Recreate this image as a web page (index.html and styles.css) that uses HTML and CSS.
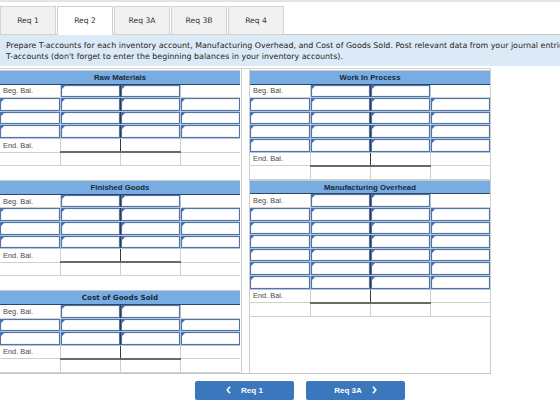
FILE: index.html
```html
<!DOCTYPE html>
<html lang="en">
<head>
  <meta charset="UTF-8">
  <meta name="viewport" content="width=device-width, initial-scale=1.0">
  <title>Req 2 - T-accounts</title>
  <link rel="stylesheet" href="styles.css">
</head>
<body>
  <div class="page">
    <ul class="tabs">
      <li>Req 1</li>
      <li class="active">Req 2</li>
      <li>Req 3A</li>
      <li>Req 3B</li>
      <li>Req 4</li>
    </ul>

    <div class="instructions">
      <p>Prepare T-accounts for each inventory account, Manufacturing Overhead, and Cost of Goods Sold. Post relevant data from your journal entries to these<br>T-accounts (don't forget to enter the beginning balances in your inventory accounts).</p>
    </div>

    <div class="accounts">
      <div class="col col-left">
        <!-- Raw Materials -->
        <table class="t-account gap">
          <tr><th colspan="4">Raw Materials</th></tr>
          <tr><td class="lbl">Beg. Bal.</td><td class="in dr"><span class="box"></span></td><td class="in"><span class="box"></span></td><td></td></tr>
          <tr><td class="in"><span class="box"></span></td><td class="in dr"><span class="box"></span></td><td class="in"><span class="box"></span></td><td class="in"><span class="box"></span></td></tr>
          <tr><td class="in"><span class="box"></span></td><td class="in dr"><span class="box"></span></td><td class="in"><span class="box"></span></td><td class="in"><span class="box"></span></td></tr>
          <tr><td class="in"><span class="box"></span></td><td class="in dr"><span class="box"></span></td><td class="in"><span class="box"></span></td><td class="in"><span class="box"></span></td></tr>
          <tr><td class="lbl">End. Bal.</td><td class="tot dr"></td><td class="tot"></td><td></td></tr>
          <tr><td></td><td></td><td></td><td></td></tr>
        </table>

        <!-- Finished Goods -->
        <table class="t-account gap">
          <tr><th colspan="4">Finished Goods</th></tr>
          <tr><td class="lbl">Beg. Bal.</td><td class="in dr"><span class="box"></span></td><td class="in"><span class="box"></span></td><td></td></tr>
          <tr><td class="in"><span class="box"></span></td><td class="in dr"><span class="box"></span></td><td class="in"><span class="box"></span></td><td class="in"><span class="box"></span></td></tr>
          <tr><td class="in"><span class="box"></span></td><td class="in dr"><span class="box"></span></td><td class="in"><span class="box"></span></td><td class="in"><span class="box"></span></td></tr>
          <tr><td class="in"><span class="box"></span></td><td class="in dr"><span class="box"></span></td><td class="in"><span class="box"></span></td><td class="in"><span class="box"></span></td></tr>
          <tr><td class="lbl">End. Bal.</td><td class="tot dr"></td><td class="tot"></td><td></td></tr>
          <tr><td></td><td></td><td></td><td></td></tr>
        </table>

        <!-- Cost of Goods Sold -->
        <table class="t-account">
          <tr><th colspan="4" class="alt">Cost of Goods Sold</th></tr>
          <tr><td class="lbl">Beg. Bal.</td><td class="in dr"><span class="box"></span></td><td class="in"><span class="box"></span></td><td></td></tr>
          <tr><td class="in"><span class="box"></span></td><td class="in dr"><span class="box"></span></td><td class="in"><span class="box"></span></td><td class="in"><span class="box"></span></td></tr>
          <tr><td class="in"><span class="box"></span></td><td class="in dr"><span class="box"></span></td><td class="in"><span class="box"></span></td><td class="in"><span class="box"></span></td></tr>
          <tr><td class="lbl">End. Bal.</td><td class="tot dr"></td><td class="tot"></td><td></td></tr>
          <tr><td></td><td></td><td></td><td></td></tr>
        </table>
      </div>

      <div class="col col-right">
        <!-- Work in Process -->
        <table class="t-account">
          <tr><th colspan="4">Work In Process</th></tr>
          <tr><td class="lbl">Beg. Bal.</td><td class="in dr"><span class="box"></span></td><td class="in"><span class="box"></span></td><td></td></tr>
          <tr><td class="in"><span class="box"></span></td><td class="in dr"><span class="box"></span></td><td class="in"><span class="box"></span></td><td class="in"><span class="box"></span></td></tr>
          <tr><td class="in"><span class="box"></span></td><td class="in dr"><span class="box"></span></td><td class="in"><span class="box"></span></td><td class="in"><span class="box"></span></td></tr>
          <tr><td class="in"><span class="box"></span></td><td class="in dr"><span class="box"></span></td><td class="in"><span class="box"></span></td><td class="in"><span class="box"></span></td></tr>
          <tr><td class="in"><span class="box"></span></td><td class="in dr"><span class="box"></span></td><td class="in"><span class="box"></span></td><td class="in"><span class="box"></span></td></tr>
          <tr><td class="lbl">End. Bal.</td><td class="tot dr"></td><td class="tot"></td><td></td></tr>
          <tr><td></td><td></td><td></td><td></td></tr>
        </table>

        <!-- Manufacturing Overhead -->
        <table class="t-account">
          <tr><th colspan="4">Manufacturing Overhead</th></tr>
          <tr><td class="lbl">Beg. Bal.</td><td class="in dr"><span class="box"></span></td><td class="in"><span class="box"></span></td><td></td></tr>
          <tr><td class="in"><span class="box"></span></td><td class="in dr"><span class="box"></span></td><td class="in"><span class="box"></span></td><td class="in"><span class="box"></span></td></tr>
          <tr><td class="in"><span class="box"></span></td><td class="in dr"><span class="box"></span></td><td class="in"><span class="box"></span></td><td class="in"><span class="box"></span></td></tr>
          <tr><td class="in"><span class="box"></span></td><td class="in dr"><span class="box"></span></td><td class="in"><span class="box"></span></td><td class="in"><span class="box"></span></td></tr>
          <tr><td class="in"><span class="box"></span></td><td class="in dr"><span class="box"></span></td><td class="in"><span class="box"></span></td><td class="in"><span class="box"></span></td></tr>
          <tr><td class="in"><span class="box"></span></td><td class="in dr"><span class="box"></span></td><td class="in"><span class="box"></span></td><td class="in"><span class="box"></span></td></tr>
          <tr><td class="in"><span class="box"></span></td><td class="in dr"><span class="box"></span></td><td class="in"><span class="box"></span></td><td class="in"><span class="box"></span></td></tr>
          <tr><td class="lbl">End. Bal.</td><td class="tot dr"></td><td class="tot"></td><td></td></tr>
          <tr><td></td><td></td><td></td><td></td></tr>
        </table>
      </div>
    </div>

    <div class="nav-buttons">
      <button>
        <svg width="5" height="8" viewBox="0 0 5 8"><path d="M4 0.8 L1.2 4 L4 7.2" fill="none" stroke="#fff" stroke-width="1.6"/></svg>
        <span>Req 1</span>
      </button>
      <button>
        <span>Req 3A</span>
        <svg width="5" height="8" viewBox="0 0 5 8"><path d="M1 0.8 L3.8 4 L1 7.2" fill="none" stroke="#fff" stroke-width="1.6"/></svg>
      </button>
    </div>
  </div>
</body>
</html>
```

FILE: styles.css
```css
body {
  margin: 0;
  overflow: hidden;
  background-color: #ffffff;
  color: #222;
  font-family: "DejaVu Sans", Verdana, sans-serif;
}

.page {
  width: 600px;
  border-top: 2px solid #e4e4e4;
}

/* Tabs */
.tabs {
  display: flex;
  gap: 1px;
  list-style: none;
  margin: 4px 0 -1px;
  padding: 0;
}

.tabs li {
  width: 56px;
  height: 29px;
  box-sizing: border-box;
  border: 1px solid #d3d3d3;
  background-color: #f1f1f1;
  font-size: 7.6px;
  line-height: 27px;
  text-align: center;
  color: #333;
}

.tabs li.active {
  position: relative;
  background-color: #ffffff;
  border-color: #cdcdcd;
  border-bottom-color: #ffffff;
}

/* Instructions */
.instructions {
  background-color: #dceaf7;
  border-top: 1px solid #c8c8c8;
  padding: 5px 6px 4px;
}

.instructions p {
  margin: 0;
  font-size: 7.9px;
  line-height: 11px;
  white-space: nowrap;
  color: #1e1e1e;
}

/* T-accounts */
.accounts {
  display: flex;
  width: 491px;
  margin-top: 2px;
  border-top: 1px solid #d2d2d2;
  border-bottom: 1px solid #c4c4c4;
}

.col {
  box-sizing: border-box;
}

.col-left {
  width: 242px;
  border-right: 1px solid #cdcdcd;
  padding-top: 1px;
}

.col-right {
  width: 242px;
  margin-left: 7px;
  padding-top: 1px;
  border-left: 1px solid #cdcdcd;
  border-right: 1px solid #cdcdcd;
}

.t-account {
  width: 240px;
  border-collapse: collapse;
  table-layout: fixed;
  font-family: "Liberation Sans", Arial, sans-serif;
}

.t-account.gap {
  margin-bottom: 14px;
}

.t-account tr {
  height: 13.6px;
}

.t-account th {
  padding: 0;
  background-color: #78ade4;
  border-top: 1px solid #c9c9c9;
  border-bottom: 1px solid #2e4666;
  font-size: 7.8px;
  font-weight: bold;
  color: #1c2836;
}

.t-account th.alt {
  font-family: "DejaVu Sans", Verdana, sans-serif;
  font-size: 7.2px;
  font-weight: 600;
}

.t-account td {
  padding: 0;
  border: 1px solid #d0d0d0;
  font-size: 7.4px;
  color: #4a4a4a;
}

.t-account td:first-child {
  border-left: none;
}

.t-account td:last-child {
  border-right: none;
}

.t-account td.lbl {
  padding-left: 3px;
  white-space: nowrap;
}

.t-account td.in {
  border-color: #b4c4da;
}

.t-account td.dr {
  border-right: 1px solid #3a3a3a;
}

.t-account td.tot {
  border-bottom: 2px solid #6a6a6a;
}

.box {
  position: relative;
  display: block;
  height: 10.6px;
  border: 1px solid #5274a6;
  box-shadow: inset 0 0 0 1px #eef3f9;
}

.box::before {
  content: "";
  position: absolute;
  left: 0;
  top: 0;
  border-top: 3px solid #2c6cd0;
  border-right: 3px solid transparent;
}

/* Prev / next buttons */
.nav-buttons {
  display: flex;
  justify-content: center;
  gap: 12px;
  margin-top: 7px;
}

.nav-buttons button {
  display: flex;
  align-items: center;
  justify-content: center;
  gap: 10px;
  width: 99px;
  height: 19px;
  padding: 0;
  border: none;
  border-radius: 2px;
  background-color: #3b77bd;
  color: #fff;
  font-family: "Liberation Sans", Arial, sans-serif;
  font-size: 8px;
  font-weight: bold;
  cursor: pointer;
}
```
